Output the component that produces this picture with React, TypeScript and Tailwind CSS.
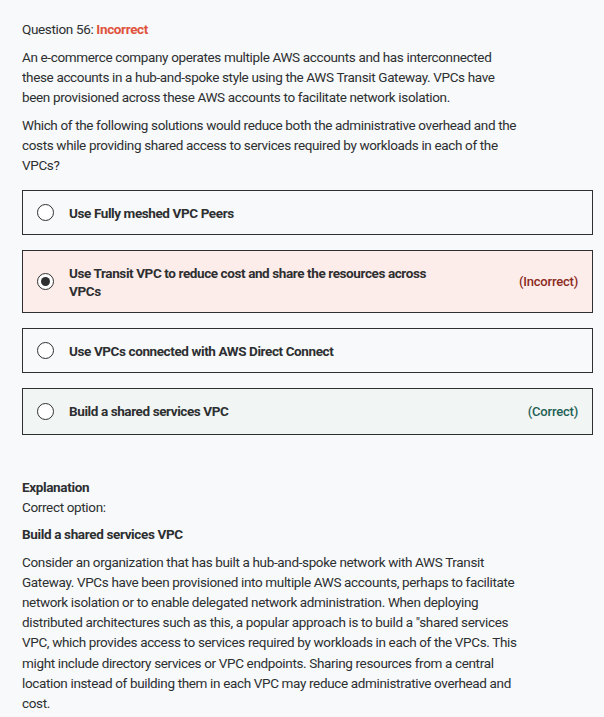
const FONT = "font-['Roboto','Liberation_Sans',sans-serif]";

type Option = {
  text: string;
  selected?: boolean;
  status?: 'correct' | 'incorrect';
};

const OPTIONS: Option[] = [
  { text: 'Use Fully meshed VPC Peers' },
  { text: 'Use Transit VPC to reduce cost and share the resources across VPCs', selected: true, status: 'incorrect' },
  { text: 'Use VPCs connected with AWS Direct Connect' },
  { text: 'Build a shared services VPC', status: 'correct' },
];

function Radio({ checked }: { checked?: boolean }) {
  return (
    <span className="flex h-[17px] w-[17px] shrink-0 items-center justify-center rounded-full border border-[#2d2f31] bg-white">
      {checked && <span className="h-[9px] w-[9px] rounded-full bg-[#2d2f31]" />}
    </span>
  );
}

function AnswerRow({ option }: { option: Option }) {
  const bg =
    option.status === 'incorrect' ? 'bg-[#fdedea]' : option.status === 'correct' ? 'bg-[#f1f5f4]' : 'bg-[#f7f9fa]';

  return (
    <div className={`flex items-center gap-[15px] border border-[#2d2f31] py-[12.5px] pl-[14px] pr-[14px] ${bg}`}>
      <Radio checked={option.selected} />
      <div className="flex-1 pr-[68px] text-[13.5px] font-bold leading-[18px] tracking-[-0.4px] text-[#2d2f31]">
        {option.text}
      </div>
      {option.status === 'incorrect' && (
        <span className="shrink-0 pl-[3px] text-[13px] font-medium tracking-[-0.2px] text-[#8b2a1e]">(Incorrect)</span>
      )}
      {option.status === 'correct' && (
        <span className="shrink-0 text-[13px] font-medium tracking-[-0.2px] text-[#1e6055]">(Correct)</span>
      )}
    </div>
  );
}

export default function App() {
  return (
    <div className={`min-h-screen bg-[#f7f9fa] ${FONT} text-[#2d2f31]`}>
      <div className="w-[593px] pl-[22px] pt-[19px]">
        <div className="text-[13.5px] leading-[20px] tracking-[-0.35px]">
          Question 56: <span className="font-bold text-[#e0533d]">Incorrect</span>
        </div>

        <div className="w-[500px] text-[13.5px] leading-[20px] tracking-[-0.35px]">
          <p className="mt-[8px]">
            An e-commerce company operates multiple AWS accounts and has interconnected these accounts in a
            hub-and-spoke style using the AWS Transit Gateway. VPCs have been provisioned across these AWS accounts to
            facilitate network isolation.
          </p>
          <p className="mt-[8px]">
            Which of the following solutions would reduce both the administrative overhead and the costs while
            providing shared access to services required by workloads in each of the VPCs?
          </p>
        </div>

        <div className="mt-[15px] flex flex-col gap-[15px]">
          {OPTIONS.map((o) => (
            <AnswerRow key={o.text} option={o} />
          ))}
        </div>

        <div className="mt-[42px] w-[500px] text-[13.5px] leading-[20px] tracking-[-0.35px]">
          <div className="font-bold">Explanation</div>
          <div>Correct option:</div>
          <div className="mt-[7px] font-bold">Build a shared services VPC</div>
          <p className="mt-[8px] leading-[20.2px]">
            Consider an organization that has built a hub-and-spoke network with AWS Transit Gateway. VPCs have been
            provisioned into multiple AWS accounts, perhaps to facilitate network isolation or to enable delegated
            network administration. When deploying distributed architectures such as this, a popular approach is to
            build a "shared services VPC, which provides access to services required by workloads in each of the
            VPCs. This might include directory services or VPC endpoints. Sharing resources from a central location
            instead of building them in each VPC may reduce administrative overhead and cost.
          </p>
        </div>
      </div>
    </div>
  );
}
